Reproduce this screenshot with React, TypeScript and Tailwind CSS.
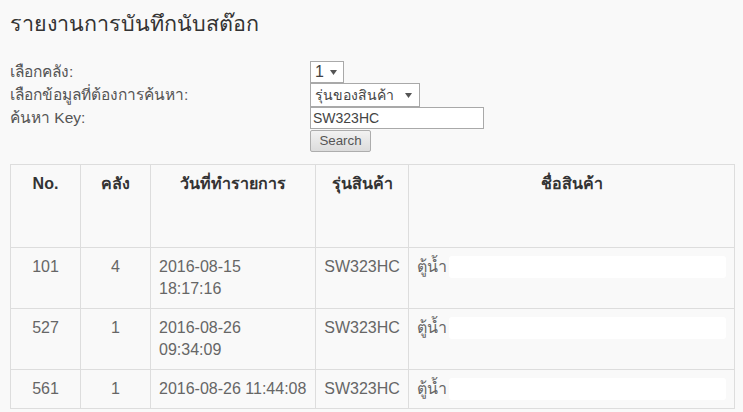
const rows = [
  { no: "101", wh: "4", date: ["2016-08-15", "18:17:16"], model: "SW323HC", name: "ตู้น้ำ", blob: "w-[280px]" },
  { no: "527", wh: "1", date: ["2016-08-26", "09:34:09"], model: "SW323HC", name: "ตู้น้ำ", blob: "w-[282px]" },
  { no: "561", wh: "1", date: ["2016-08-26 11:44:08"], model: "SW323HC", name: "ตู้น้ำ", blob: "w-[280px]" },
];

const Caret = () => (
  <svg width="7" height="5" viewBox="0 0 7 5" className="ml-[6px]">
    <path d="M0 0h7L3.5 5z" fill="#555" />
  </svg>
);

export default function App() {
  return (
    <div
      className="w-[743px] h-[412px] overflow-hidden bg-[#f9f9f9] text-[#555] px-[10px] pt-[9px]"
      style={{ fontFamily: '"Liberation Sans", "Noto Sans", Tahoma, sans-serif' }}
    >
      <h1 className="text-[21.5px] leading-[30px] text-[#333]">รายงานการบันทึกนับสต๊อก</h1>

      <div className="mt-[22px] grid grid-cols-[300px_auto] text-[15.5px] leading-[18px] items-center">
        <div className="h-[22px] flex items-center">เลือกคลัง:</div>
        <div className="h-[22px] flex items-center">
          <div className="h-[22px] w-[34px] border border-[#a9a9a9] bg-white flex items-center pl-[4px] text-[16px] text-[#444]">
            1<Caret />
          </div>
        </div>

        <div className="h-[24px] flex items-center">เลือกข้อมูลที่ต้องการค้นหา:</div>
        <div className="h-[24px] flex items-center">
          <div className="h-[24px] w-[110px] border border-[#a9a9a9] bg-white flex items-center pl-[4px] text-[14px] text-[#444]">
            รุ่นของสินค้า<span className="ml-auto mr-[7px] flex"><Caret /></span>
          </div>
        </div>

        <div className="h-[22px] flex items-center">ค้นหา Key:</div>
        <div className="h-[22px] flex items-center">
          <div className="h-[22px] w-[174px] border border-[#a9a9a9] bg-white flex items-center pl-[2px] text-[14px] text-[#444]">
            SW323HC
          </div>
        </div>

        <div className="h-[22px]" />
        <div className="h-[23px] flex items-center">
          <button className="h-[22px] w-[61px] border border-[#adadad] rounded-[2px] bg-gradient-to-b from-[#f2f2f2] to-[#dcdcdc] text-[13.33px] text-[#555]">
            Search
          </button>
        </div>
      </div>

      <table className="mt-[12px] w-[725px] table-fixed border-collapse text-[16px] leading-[22px] text-[#666]">
        <thead>
          <tr className="h-[83px] align-top text-[#333] font-bold">
            <th className="w-[70px] border border-[#ddd] px-[8px] py-[8px] text-center">No.</th>
            <th className="w-[70px] border border-[#ddd] px-[8px] py-[8px] text-center">คลัง</th>
            <th className="w-[165px] border border-[#ddd] px-[8px] py-[8px] text-center">วันที่ทำรายการ</th>
            <th className="w-[93px] border border-[#ddd] px-[8px] py-[8px] text-center">รุ่นสินค้า</th>
            <th className="border border-[#ddd] px-[8px] py-[8px] text-center">ชื่อสินค้า</th>
          </tr>
        </thead>
        <tbody>
          {rows.map((r) => (
            <tr key={r.no} className="align-top">
              <td className="border border-[#ddd] px-[8px] py-[8px] text-center">{r.no}</td>
              <td className="border border-[#ddd] px-[8px] py-[8px] text-center">{r.wh}</td>
              <td className="border border-[#ddd] px-[8px] py-[8px] whitespace-nowrap">
                {r.date.map((d) => (
                  <div key={d}>{d}</div>
                ))}
              </td>
              <td className="border border-[#ddd] px-[8px] py-[8px] text-center">{r.model}</td>
              <td className="border border-[#ddd] px-[8px] py-[8px]">
                <div className="flex items-center whitespace-nowrap">
                  <span>{r.name}</span>
                  <span className={`ml-[2px] h-[22px] ${r.blob} bg-white rounded-[3px]`} />
                </div>
              </td>
            </tr>
          ))}
        </tbody>
      </table>
    </div>
  );
}
